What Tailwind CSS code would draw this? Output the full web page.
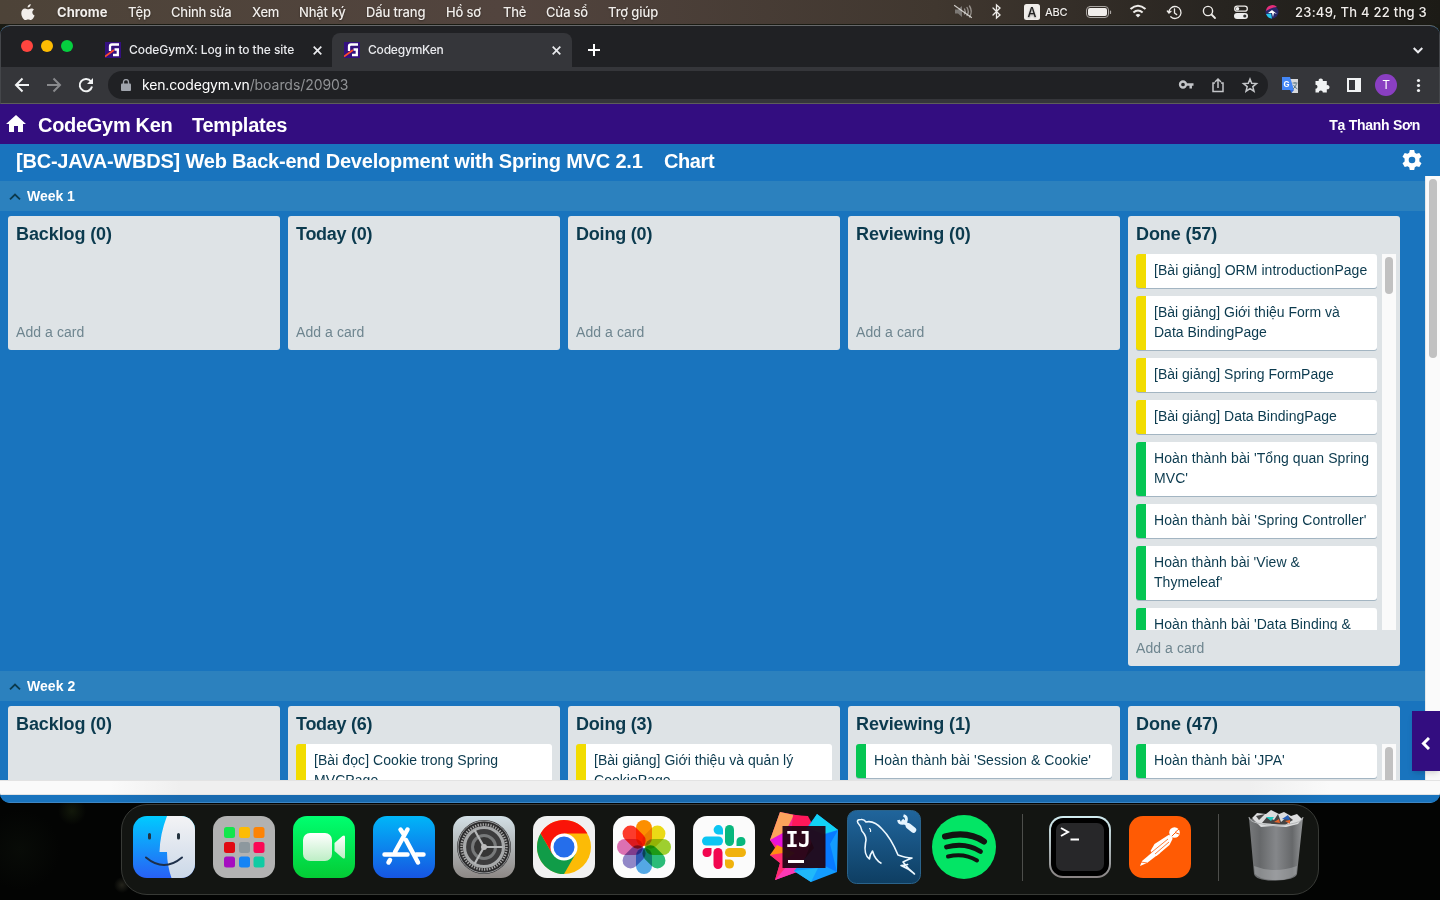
<!DOCTYPE html>
<html lang="vi">
<head>
<meta charset="utf-8">
<title>CodegymKen</title>
<script src="https://cdn.jsdelivr.net/npm/@tailwindcss/browser@4"></script>
</head>
<body class="w-[1440px] h-[900px] overflow-hidden bg-[#030403] font-['Liberation_Sans',Arial,sans-serif]">
<div class="w-[1440px] h-[900px] flex flex-col overflow-hidden bg-[radial-gradient(circle_at_72px_811px,#12180a_0,transparent_14px),radial-gradient(circle_at_20px_850px,#080b07_0,transparent_40px),radial-gradient(circle_at_122px_885px,#24241c_0,transparent_8px),linear-gradient(#24251a,#030403_80px)]">

  <!-- Menu bar -->
  <header class="h-6 mb-px shrink-0 flex items-center text-[13px] text-[#f1eeeb] font-medium font-[Inter,sans-serif] bg-[linear-gradient(90deg,#4d4338,#52443e_35%,#40372f_65%,#272420_85%,#1c1b16)] [text-shadow:0_1px_2px_rgba(0,0,0,.4)] whitespace-nowrap *:[&:is(div)]:pt-px">
    <div class="w-[57px] pl-[21px]"><svg width="14" height="17" viewBox="0 0 14 17" fill="#f1eeeb"><path d="M9.7 0c.2 1.900-1.300 3.600-3.100 3.600C6.400 1.800 8 .2 9.700 0zM13 5.600c-2.500 1.500-2 4.800.6 5.900-.7 2-2.200 4.500-3.700 4.500-1 0-1.400-.6-2.700-.6s-1.800.6-2.700.6C2.600 16 .3 12.500.3 9.200c0-3 1.800-4.800 3.800-4.800 1.200 0 2.200.8 3 .8s1.900-.9 3.400-.8c1 0 1.900.5 2.500 1.200z"/></svg></div>
    <div class="w-[71px] pt-[2px]! font-bold tracking-[0.05px]">Chrome</div>
    <div class="w-[43px] pt-[2px]!">Tệp</div>
    <div class="w-[81px] pt-[2px]! tracking-[-0.22px]">Chỉnh sửa</div>
    <div class="w-[47px] pt-[2px]! tracking-[-0.3px]">Xem</div>
    <div class="w-[67px] pt-[2px]! tracking-[-0.15px]">Nhật ký</div>
    <div class="w-[80px] pt-[2px]! tracking-[-0.15px]">Dấu trang</div>
    <div class="w-[57px] pt-[2px]! tracking-[-0.2px]">Hồ sơ</div>
    <div class="w-[43px] pt-[2px]! tracking-[-0.3px]">Thẻ</div>
    <div class="w-[62px] pt-[2px]! tracking-[-0.25px]">Cửa sổ</div>
    <div class="w-[345px] pt-[2px]! tracking-[-0.12px]">Trợ giúp</div>
    <svg class="shrink-0" width="342" height="24" viewBox="953 0 342 24" fill="none" stroke="#eeece9" stroke-width="1.400" stroke-linecap="round">
      <g opacity=".5"><path d="M955 9.500h3l4-3.500v11l-4-3.500h-3z" fill="#bbb" stroke="none"/><path d="M964.500 9q1.500 2.500 0 5M967 7.500q2.500 4 0 8M969.500 6q3.500 5.500 0 11"/></g><path d="M954.500 5.500l17 12" stroke-width="1.200" opacity=".8"/>
      <path d="M993 8l7 7-3.500 3V5l3.500 3-7 7" stroke-width="1.300"/>
      <rect x="1024" y="4" width="16" height="16" rx="2.500" fill="#f1eeeb" stroke="none"/>
      <rect x="1086.500" y="6.500" width="22" height="11" rx="3.500" stroke="#aaa6a2" stroke-width="1"/><rect x="1088" y="8" width="19" height="8" rx="2" fill="#f1eeeb" stroke="none"/><path d="M1110.500 11v2.500"  stroke="#aaa6a2" stroke-width="1.200"/>
      <path d="M1130.500 9q7.500-6.500 15 0M1133.400 12.500q4.600-4 9.200 0" stroke-width="2.100" stroke-linecap="butt"/><path d="M1135.500 15q2.500-2.200 5 0l-2.500 2.500z" fill="#eee" stroke="none"/>
      <path d="M1169 12.500a6 6 0 1 1 1.800 4.300M1167.300 11l1.700 2 2-1.700M1174.500 9v4l2.200 1.600" stroke-width="1.300"/>
      <circle cx="1208" cy="11" r="4.600"/><path d="M1211.500 14.500l3.500 3.500" stroke-width="1.800"/>
      <rect x="1234.700" y="6.200" width="12.600" height="5" rx="2.500" stroke-width="1.300"/><circle cx="1237.500" cy="8.700" r="1.800" fill="#eee" stroke="none"/><rect x="1234" y="13" width="14" height="6" rx="3" fill="#eee" stroke="none"/><circle cx="1244.800" cy="16" r="1.600" fill="#333" stroke="none"/>
      <circle cx="1272" cy="12" r="6.500" fill="#27286a" stroke="none"/><path d="M1266 11a6.500 6.500 0 0 1 11-4q-5 0-11 4z" fill="#e82e78" stroke="none"/><path d="M1266 14q2 4.500 6 4.500l-1-5z" fill="#27c4e9" stroke="none"/><path d="M1268 13l4-3 5 4-3-1-1 4-1-4z" fill="#fff" stroke="none"/>
      <text x="1032" y="16.500" text-anchor="middle" font-size="12.500" fill="#222" stroke="none">A</text>
      <text x="1045" y="16" font-size="11" textLength="22.500" fill="#eeece9" stroke="none">ABC</text>
    </svg>
    <div class="tracking-[0.25px] -ml-[0px] w-[132px]">23:49, Th 4 22 thg 3</div>
  </header>

  <!-- Browser window -->
  <main class="h-[778px] shrink-0 flex flex-col rounded-[10px] overflow-hidden bg-[#1974be] border-t border-t-[#66686a]">
    <div class="h-[41px] shrink-0 flex items-end bg-[#202124] border-x border-[#44464a] text-xs font-medium text-[#e9eaed] font-[Inter,sans-serif] tracking-[-0.06px]">
      <div class="flex w-[104px] h-full pl-5 pt-[14px] gap-2">
        <span class="size-3 rounded-full bg-[#ff453f]"></span><span class="size-3 rounded-full bg-[#febc02]"></span><span class="size-3 rounded-full bg-[#05cf3f]"></span>
      </div>
      <div class="w-[227px] h-[34px] flex items-center">
        <svg class="shrink-0 mr-2" width="16" height="16" viewBox="0 0 16 16"><path fill="#34107f" d="M0 0h16v16H0z"/><path d="M14 2.500H7Q5 2.500 5 4.500V9M14 7.500H9.500M12.800 7.500V13H8" stroke="#fff" stroke-width="2.300" fill="none"/><path d="M0 14.500L9 8" stroke="#ff4b2b" stroke-width="1.800"/></svg>
        <span class="w-[184px] whitespace-nowrap">CodeGymX: Log in to the site</span>
        <svg width="9" height="9" viewBox="0 0 9 9" stroke="#e9eaed" stroke-width="1.700"><path d="M.7.7l7.600 7.600M8.300.7L.7 8.300"/></svg>
      </div>
      <div class="w-[240px] h-[34px] pl-[12px] rounded-t-[8px] bg-[#35363a] flex items-center">
        <svg class="shrink-0 mr-2" width="16" height="16" viewBox="0 0 16 16"><path fill="#34107f" d="M0 0h16v16H0z"/><path d="M14 2.500H7Q5 2.500 5 4.500V9M14 7.500H9.500M12.800 7.500V13H8" stroke="#fff" stroke-width="2.300" fill="none"/><path d="M0 14.500L9 8" stroke="#ff4b2b" stroke-width="1.800"/></svg>
        <span class="w-[184px] tracking-[-0.2px]">CodegymKen</span>
        <svg width="9" height="9" viewBox="0 0 9 9" stroke="#e9eaed" stroke-width="1.700"><path d="M.7.700l7.600 7.600M8.300.7L.7 8.300"/></svg>
      </div>
      <div class="flex-1 h-[34px] flex items-center justify-between pl-[16px] pr-4">
        <svg width="12" height="12" viewBox="0 0 12 12" stroke="#fff" stroke-width="2"><path d="M6 0v12M0 6h12"/></svg>
        <svg width="10" height="7" viewBox="0 0 10 7" stroke="#e9eaed" stroke-width="2" fill="none"><path d="M.7 1L5 5.300 9.300 1"/></svg>
      </div>
    </div>

    <div class="h-[37px] shrink-0 flex items-center bg-[#35363a] border-x border-b border-[#44464a] border-b-[#5d5e5a]">
      <svg class="shrink-0" width="107" height="36" viewBox="1 67 107 36" fill="none" stroke="#f1f3f4" stroke-width="2"><path d="M29 85H16M22.500 78.500L16 85l6.500 6.500"/><path d="M47 85h13M53.500 78.500L60 85l-6.500 6.500" stroke="#898a8d"/><path d="M91 81.500a6.200 6.200 0 1 0 1 5"/><path d="M93 78v6h-6z" fill="#f1f3f4" stroke="none"/></svg>
      <div class="w-[1160px] h-7 rounded-full bg-[#202124] flex items-center pl-[13px] text-[14px] font-[Inter,sans-serif] text-[#909295]">
        <svg class="mr-[11px]" width="10" height="12" viewBox="0 0 10 12"><path d="M1 4.500h8q1 0 1 1V11q0 1-1 1H1q-1 0-1-1V5.500q0-1 1-1z" fill="#a0a4ac"/><path d="M2.500 5V3a2.500 2.500 0 0 1 5 0v2" stroke="#a0a4ac" stroke-width="1.300" fill="none"/></svg>
        <div class="flex-1 pb-px"><span class="text-white tracking-[-0.16px]">ken.codegym.vn</span><span class="tracking-[-0.06px]">/boards/20903</span></div>
        <svg width="90" height="28" viewBox="1178 71 90 28" fill="none" stroke="#c3c5c8" stroke-width="1.500"><circle cx="1183" cy="84.500" r="3" stroke-width="2.300"/><path d="M1186 84.500h7.500M1190.700 84.500v4" stroke-width="2.500"/><path d="M1215 83h-2v8.500h10V83h-2M1218 88v-8.500M1215 82l3-3 3 3"/><path d="M1250 79l1.700 4.300 4.800.3-3.700 3 1.200 4.600-4-2.600-4 2.600 1.200-4.600-3.700-3 4.800-.3z"/></svg>
      </div>
      <svg class="shrink-0" width="170" height="36" viewBox="1268 67 170 36"><path d="M1289 79h9v14h-6z" fill="#d7d9dc"/><path d="M1282 77h8l4 13h-12z" fill="#4386f5"/><path d="M1290 90h4l-2.500 3z" fill="#3367d6"/><text x="1283.500" y="87" font-size="8" font-weight="700" fill="#fff" font-family="Inter">G</text><path d="M1292.500 83h5M1295 82v1.500M1293 89q3-2 3.500-5.500M1293.500 85q1 2.500 4 4" stroke="#607d8b" fill="none"/><path d="M1315.500 81h3.200a2.100 2.100 0 1 1 4.100 0h4v4.200a2.100 2.100 0 1 1 0 4v3.300h-4a2 2 0 1 0-4 0h-3.300v-3.700a2 2 0 1 0 0-4z" fill="#f1f3f4"/><path d="M1348 79h12v12h-12z" stroke="#f1f3f4" stroke-width="2" fill="none"/><path d="M1355 79h6v12h-6z" fill="#f1f3f4"/><circle cx="1386" cy="85" r="11" fill="#8a3fc2"/><text x="1386" y="89.200" font-size="12" text-anchor="middle" fill="#fff" font-family="Inter">T</text><g fill="#f1f3f4"><circle cx="1418.500" cy="80.500" r="1.600"/><circle cx="1418.500" cy="85.500" r="1.600"/><circle cx="1418.500" cy="90.500" r="1.600"/></g></svg>
    </div>

    <nav class="h-10 shrink-0 bg-[#330d80] flex items-center text-white font-bold text-[20px] pl-[6px] pr-5 pt-px">
      <svg class="mr-[12px] mb-[3px]" width="20" height="17" viewBox="0 0 20 17" fill="#fff"><path d="M10 0l10 9h-3v8h-5v-6H8v6H3V9H0z"/></svg>
      <span class="w-[154px] tracking-[-0.3px]">CodeGym Ken</span><span class="flex-1 tracking-[-0.25px]">Templates</span>
      <span class="text-[14px] pt-px tracking-[-0.27px]">Tạ Thanh Sơn</span>
    </nav>

    <div class="relative flex-1 flex flex-col">
      <div class="h-[32px] shrink-0 flex items-center justify-between pl-4 pr-[18px] pt-[2px] text-white font-bold text-[20px]">
        <div class="flex whitespace-nowrap"><span class="w-[648px] tracking-[-0.21px]">[BC-JAVA-WBDS] Web Back-end Development with Spring MVC 2.1</span><span class="tracking-[-0.4px]">Chart</span></div>
        <svg class="mb-[2px]" width="20" height="20" viewBox="0 0 20 20" fill="#fff"><path fill-rule="evenodd" d="M7.800 0h4.400l.6 2.800 1.700 1 2.800-.9 2.200 3.800-2.100 1.900v2.800l2.100 1.900-2.200 3.800-2.800-.9-1.700 1-.6 2.800H7.800l-.6-2.800-1.700-1-2.800.9L.5 13.300l2.100-1.900V8.600L.5 6.700l2.200-3.800 2.800.9 1.700-1zM10 6.700a3.300 3.300 0 1 0 0 6.600 3.300 3.300 0 0 0 0-6.600z"/></svg>
      </div>

      <div class="h-[604px] flex">
        <div class="w-[1425px] h-full overflow-hidden pt-[5px] text-[#0b3a4e]">
          <div class="h-[30px] bg-[#2c81be] flex items-center pl-[9px] text-white font-bold text-[14px] tracking-[-0.05px]"><svg class="mr-[6px]" width="12" height="7" viewBox="0 0 12 7" stroke="#0b3a4e" stroke-width="1.800" fill="none"><path d="M1 6.300L6 1.500l5 4.800"/></svg>Week 1</div>
          <div class="h-[460px] pt-[5px] px-2 flex items-start gap-2">
            <section class="w-[272px] h-[134px] rounded-[3px] bg-[#dee3e6] px-2 pb-2 flex flex-col justify-between"><h2 class="text-[18px] font-bold leading-[36px] tracking-[-0.1px]">Backlog (0)</h2><p class="text-[14px] leading-5 text-[#6e858f] tracking-[0.07px]">Add a card</p></section>
            <section class="w-[272px] h-[134px] rounded-[3px] bg-[#dee3e6] px-2 pb-2 flex flex-col justify-between"><h2 class="text-[18px] font-bold leading-[36px] tracking-[-0.28px]">Today (0)</h2><p class="text-[14px] leading-5 text-[#6e858f] tracking-[0.07px]">Add a card</p></section>
            <section class="w-[272px] h-[134px] rounded-[3px] bg-[#dee3e6] px-2 pb-2 flex flex-col justify-between"><h2 class="text-[18px] font-bold leading-[36px] tracking-[-0.2px]">Doing (0)</h2><p class="text-[14px] leading-5 text-[#6e858f] tracking-[0.07px]">Add a card</p></section>
            <section class="w-[272px] h-[134px] rounded-[3px] bg-[#dee3e6] px-2 pb-2 flex flex-col justify-between"><h2 class="text-[18px] font-bold leading-[36px] tracking-[-0.1px]">Reviewing (0)</h2><p class="text-[14px] leading-5 text-[#6e858f] tracking-[0.07px]">Add a card</p></section>
            <section class="w-[272px] h-[450px] rounded-[3px] bg-[#dee3e6] pl-2"><h2 class="text-[18px] font-bold leading-[36px] h-[38px] tracking-[-0.1px]">Done (57)</h2>
              <div class="h-[376px] overflow-hidden flex text-[14px] leading-5">
                <div class="w-[241px] mr-[5px] flex flex-col gap-2 *:bg-white *:rounded-[3px] *:border-l-[10px] *:pl-2 *:pt-[6px] *:pb-2 *:whitespace-nowrap *:shadow-[0_1px_0_#a3b5c2] *:shrink-0">
                  <div class="border-[#f2dc00] tracking-[0.05px]">[Bài giảng] ORM introductionPage</div>
                  <div class="border-[#f2dc00]">[Bài giảng] Giới thiệu Form và<br>Data BindingPage</div>
                  <div class="border-[#f2dc00]">[Bài giảng] Spring FormPage</div>
                  <div class="border-[#f2dc00]">[Bài giảng] Data BindingPage</div>
                  <div class="border-[#05c653] tracking-[0.07px]">Hoàn thành bài 'Tổng quan Spring<br>MVC'</div>
                  <div class="border-[#05c653] tracking-[0.1px]">Hoàn thành bài 'Spring Controller'</div>
                  <div class="border-[#05c653] tracking-[0.05px]">Hoàn thành bài 'View &amp;<br>Thymeleaf'</div>
                  <div class="border-[#05c653] tracking-[0.07px]">Hoàn thành bài 'Data Binding &amp;</div>
                </div>
                <div class="w-[14px] bg-[#fafafa] pl-[3px] pt-[3px]"><div class="w-2 h-[37px] rounded-full bg-[#c1c1c1]"></div></div>
              </div>
              <p class="text-[14px] leading-5 pt-2 text-[#6e858f] tracking-[0.07px]">Add a card</p>
            </section>
          </div>
          <div class="h-[30px] bg-[#2c81be] flex items-center pl-[9px] text-white font-bold text-[14px] tracking-[0.05px]"><svg class="mr-[6px]" width="12" height="7" viewBox="0 0 12 7" stroke="#0b3a4e" stroke-width="1.800" fill="none"><path d="M1 6.300L6 1.500l5 4.800"/></svg>Week 2</div>
          <div class="h-[200px] pt-[5px] px-2 flex gap-2">
            <section class="w-[272px] rounded-[3px] bg-[#dee3e6] px-2"><h2 class="text-[18px] font-bold leading-[36px] tracking-[-0.1px]">Backlog (0)</h2></section>
            <section class="w-[272px] rounded-[3px] bg-[#dee3e6] px-2"><h2 class="text-[18px] font-bold leading-[36px] mb-[2px] tracking-[-0.28px]">Today (6)</h2><div class="bg-white rounded-[3px] border-l-[10px] border-[#f2dc00] pl-2 pt-[6px] pb-2 text-[14px] leading-5 tracking-[0.07px]">[Bài đọc] Cookie trong Spring<br>MVCPage</div></section>
            <section class="w-[272px] rounded-[3px] bg-[#dee3e6] px-2"><h2 class="text-[18px] font-bold leading-[36px] mb-[2px] tracking-[-0.2px]">Doing (3)</h2><div class="bg-white rounded-[3px] border-l-[10px] border-[#f2dc00] pl-2 pt-[6px] pb-2 text-[14px] leading-5 tracking-[0.03px]">[Bài giảng] Giới thiệu và quản lý<br>CookiePage</div></section>
            <section class="w-[272px] rounded-[3px] bg-[#dee3e6] px-2"><h2 class="text-[18px] font-bold leading-[36px] mb-[2px] tracking-[-0.1px]">Reviewing (1)</h2><div class="bg-white rounded-[3px] border-l-[10px] border-[#05c653] pl-2 pt-[6px] pb-2 text-[14px] leading-5 tracking-[0.07px] shadow-[0_1px_0_#a3b5c2]">Hoàn thành bài 'Session &amp; Cookie'</div></section>
            <section class="w-[272px] rounded-[3px] bg-[#dee3e6] pl-2"><h2 class="text-[18px] font-bold leading-[36px] mb-[2px]">Done (47)</h2><div class="flex items-start"><div class="w-[241px] mr-[5px] bg-white rounded-[3px] border-l-[10px] border-[#05c653] pl-2 pt-[6px] pb-2 text-[14px] leading-5 tracking-[0.1px] shadow-[0_1px_0_#a3b5c2]">Hoàn thành bài 'JPA'</div><div class="w-[14px] h-[80px] bg-[#fafafa] pl-[3px] pt-[3px]"><div class="w-2 h-[100px] rounded-full bg-[#c1c1c1]"></div></div></div></section>
          </div>
        </div>
        <div class="w-[15px] h-full bg-[#fafafa] border-l border-[#e8e8e8] pl-[3px] pt-[3px]"><div class="w-2 h-[179px] rounded-full bg-[#c1c1c1]"></div></div>
      </div>
      <div class="h-[15px] shrink-0 border-y border-[#e3e3e3] bg-[linear-gradient(90deg,#fafafa_110px,#efefef_180px,#efefef_1250px,#fafafa_1330px)]"></div>
      <div class="flex-1 bg-[linear-gradient(90deg,#1974be_100px,#196aaf_180px,#196aaf_1250px,#1974be_1330px)] border-b border-[#3d86c4]"></div>
      <button class="absolute right-0 top-[567px] w-7 h-[60px] pr-[2px] pt-1 bg-[#330d80] flex items-center justify-center shadow-md"><svg width="9" height="13" viewBox="0 0 9 13" fill="none" stroke="#fff" stroke-width="3"><path d="M8 1L2.500 6.500 8 12"/></svg></button>
    </div>
  </main>

  <!-- Dock -->
  <footer class="mt-px ml-[121px] w-[1198px] h-[91px] shrink-0 rounded-[26px] border border-[#383a36] bg-[#131512] px-[2px] pb-[5px] flex items-center *:shrink-0">
    <svg width="80" height="80" viewBox="-9 -9 80 80"><defs><linearGradient id="fb" x2="0" y2="1"><stop stop-color="#00cbff"/><stop offset="1" stop-color="#2860f5"/></linearGradient><linearGradient id="fw" x2="0" y2="1"><stop stop-color="#f3f3f5"/><stop offset="1" stop-color="#cbd8e8"/></linearGradient><clipPath id="rc"><rect width="62" height="62" rx="14"/></clipPath></defs><g clip-path="url(#rc)"><path fill="url(#fb)" d="M0 0h62v62H0z"/><path d="M34 0q-7 18-7.500 36H34q0 13 4.500 26H62V0z" fill="url(#fw)"/></g><path d="M16.500 18.500v3.500M45.500 18.500v3.500" stroke="#23323e" stroke-width="3" stroke-linecap="round"/><path d="M13 41.500q18 15 36 0" stroke="#1d2f49" stroke-width="2" fill="none" stroke-linecap="round"/></svg>

    <svg width="80" height="80" viewBox="-9 -9 80 80"><rect width="62" height="62" rx="14" fill="#b2b2b2"/><g><rect x="11" y="11" width="11" height="11" rx="2.500" fill="#13e64c"/><rect x="26" y="11" width="11" height="11" rx="2.500" fill="#fcbc05"/><rect x="40.500" y="11" width="11" height="11" rx="2.500" fill="#fd8306"/><rect x="11" y="26" width="11" height="11" rx="2.500" fill="#e10811"/><rect x="26" y="26" width="11" height="11" rx="2.500" fill="#8d989e"/><rect x="40.500" y="26" width="11" height="11" rx="2.500" fill="#fb0755"/><rect x="11" y="40.500" width="11" height="11" rx="2.500" fill="#a50dc0"/><rect x="26" y="40.500" width="11" height="11" rx="2.500" fill="#1584f5"/><rect x="40.500" y="40.500" width="11" height="11" rx="2.500" fill="#0fcba3"/></g></svg>

    <svg width="80" height="80" viewBox="-9 -9 80 80"><defs><linearGradient id="gr" x2="0" y2="1"><stop stop-color="#00ff70"/><stop offset="1" stop-color="#04cc35"/></linearGradient><linearGradient id="wg" x2="0" y2="1"><stop stop-color="#fff"/><stop offset="1" stop-color="#bdeec5"/></linearGradient></defs><rect width="62" height="62" rx="14" fill="url(#gr)"/><rect x="10" y="17" width="29" height="28" rx="7" fill="url(#wg)"/><path d="M41.500 27l8-7q2.500-1.500 2.500 1v20q0 2.500-2.500 1l-8-7z" fill="url(#wg)"/></svg>

    <svg width="80" height="80" viewBox="-9 -9 80 80"><defs><linearGradient id="as" x2="0" y2="1"><stop stop-color="#00b6f8"/><stop offset="1" stop-color="#1755e2"/></linearGradient></defs><rect width="62" height="62" rx="14" fill="url(#as)"/><g stroke="#fff" stroke-width="4.500" stroke-linecap="round"><path d="M27.500 13.500l3 4.500M34.500 13.500L22 36M33 24l12 22.500M11.500 38.500h23M43 38.500h7.500M17 44l-1.500 2.500"/></g></svg>

    <svg width="80" height="80" viewBox="-9 -9 80 80"><defs><linearGradient id="sg" x2="0" y2="1"><stop stop-color="#d3e0e6"/><stop offset="1" stop-color="#8d8885"/></linearGradient></defs><rect width="62" height="62" rx="14" fill="url(#sg)"/><circle cx="31" cy="31" r="27" fill="#2c2c2d"/><circle cx="31" cy="31" r="26" stroke="#999b9d" fill="none"/><circle cx="31" cy="31" r="22.500" stroke="#aaa" stroke-width="2.500" stroke-dasharray="1.300 1.300" fill="none"/><circle cx="31" cy="31" r="19.500" stroke="#a7a9aa" stroke-width="3.200" fill="#3c3c3d"/><circle cx="31" cy="31" r="11.500" stroke="#77797a" stroke-width="3" fill="#353535"/><path d="M31 31h19M31 31l-9.500-17M31 31l-9.500 17" stroke="#b5b7b8" stroke-width="2.200"/><circle cx="31" cy="31" r="3" fill="#bbb"/></svg>

    <svg width="80" height="80" viewBox="-9 -9 80 80"><rect width="62" height="62" rx="14" fill="#f1f1f1"/><circle cx="31" cy="31" r="27" fill="#fcbb06"/><path d="M7.600 17.500A27 27 0 0 0 31 58l11.700-20.200H19.300z" fill="#109c48"/><path d="M7.600 17.500L19.300 37.800 31 31V17.500h23.400A27 27 0 0 0 7.600 17.500z" fill="#fa1408"/><circle cx="31" cy="31" r="13.500" fill="#fff"/><circle cx="31" cy="31" r="10.500" fill="#256eeb"/></svg>

    <svg width="80" height="80" viewBox="-9 -9 80 80"><rect width="62" height="62" rx="14" fill="#fcfcfc"/><g class="*:mix-blend-multiply"><rect x="23" y="4" width="16" height="26" rx="8" fill="#ff9100"/><rect x="23" y="4" width="16" height="26" rx="8" fill="#eedd16" transform="rotate(45 31 31)"/><rect x="23" y="4" width="16" height="26" rx="8" fill="#a0d22f" transform="rotate(90 31 31)"/><rect x="23" y="4" width="16" height="26" rx="8" fill="#2cbe79" transform="rotate(135 31 31)"/><rect x="23" y="4" width="16" height="26" rx="8" fill="#55aae8" transform="rotate(180 31 31)"/><rect x="23" y="4" width="16" height="26" rx="8" fill="#9389ca" transform="rotate(225 31 31)"/><rect x="23" y="4" width="16" height="26" rx="8" fill="#df71b4" transform="rotate(270 31 31)"/><rect x="23" y="4" width="16" height="26" rx="8" fill="#ff3b2c" transform="rotate(315 31 31)"/></g></svg>

    <svg width="80" height="80" viewBox="-9 -9 80 80"><rect width="62" height="62" rx="14" fill="#fbfbfb"/><g fill="#0bc5f2"><rect x="9" y="20.500" width="21" height="9" rx="4.500"/><path d="M30 18.500h-5a4.700 4.700 0 1 1 5-4.700z"/></g><g fill="#08b77d"><rect x="32" y="9" width="9" height="21" rx="4.500"/><path d="M43.500 30v-5a4.500 4.500 0 1 1 4.700 5z"/></g><g fill="#f0b20d"><rect x="32" y="32" width="21" height="9" rx="4.500"/><path d="M32 43.500h5a4.500 4.500 0 1 1-5 4.700z"/></g><g fill="#f2064f"><rect x="20.500" y="32" width="9" height="21" rx="4.500"/><path d="M18.500 32v5a4.500 4.500 0 1 1-4.700-5z"/></g></svg>

    <svg width="80" height="80" viewBox="764 807 80 80"><path d="M780 812l21 4 13 20-14 35-25 9 5-17-10-8 7-4-7-11z" fill="#fa258f"/><path d="M780 812l14 3-15 29-9-4z" fill="#fca35c"/><path d="M793 815l15 1 10 19-27 2z" fill="#ff185a"/><path d="M770 840l22-12-5 26z" fill="#e712db"/><path d="M770 855l7-10 18 8-12 8z" fill="#ff8d13"/><path d="M783 853l10 19-18 8 5-17-10-8z" fill="#ff2c70"/><path d="M775 880l17-20 10 10z" fill="#fb39b5"/><path d="M817 814l21 16-1 42-26 10-17-11 20-23-8-19z" fill="#139cff"/><path d="M817 814l21 16-15 4-15-6z" fill="#12d3f6"/><path d="M838 830l-8 14 7 28-14-7v-30z" fill="#087aff"/><path d="M794 871l17 11 7-14z" fill="#20b9fa"/><path d="M782.500 826h43v42h-43z" fill="#210514" fill-opacity=".94"/><text x="785.500" y="847" font-size="21.500" font-weight="700" fill="#fff" font-family="DejaVu Sans Mono" letter-spacing="-.5">IJ</text><path d="M788 860h16v3h-16z" fill="#fff"/></svg>

    <svg width="80" height="80" viewBox="844 807 80 80"><defs><linearGradient id="my" x2="0" y2="1"><stop stop-color="#20659c"/><stop offset="1" stop-color="#0e3e62"/></linearGradient></defs><rect x="847.500" y="810.500" width="73" height="73" rx="9" fill="url(#my)" stroke="#2a638b"/><path d="M881.500 863.500Q875 860 872.500 851q-3 4-3 8-6-4-4-16 2-6-3.500-12-1-5-4-8Q856 819.500 861 819.500q3-.5 5 2.500 8-2 16 7 9 9 16 26 8 3 14 3-5 2-9 4 5 7 11.500 12-7-6-13.500-8.500 6 0 7-1.500" fill="none" stroke="#edf8ff" stroke-width="1.600" stroke-linejoin="round"/><path d="M869 828.500q2 0 1.500 3.500" stroke="#edf8ff" stroke-width="1.200" fill="none"/><path d="M902 820l10 9" stroke="#e6f5ff" stroke-width="3.500"/><path d="M903.500 815.500a4 4 0 1 1-5 4.500" stroke="#e6f5ff" stroke-width="2.800" fill="none"/><path d="M908.500 826l5 4" stroke="#e6f5ff" stroke-width="5.500" stroke-linecap="round"/></svg>

    <svg width="80" height="80" viewBox="-8 -8 80 80"><circle cx="32" cy="32" r="32" fill="#03e565"/><g stroke="#121411" fill="none" stroke-linecap="round"><path d="M13 21.500q23-6 39 5" stroke-width="6"/><path d="M14.500 32q19-5 34 4.500" stroke-width="4.800"/><path d="M16 41.500q16-4 29 4" stroke-width="4"/></g></svg>

    <div class="w-9 flex justify-center"><div class="w-px h-[67px] bg-[#4d4e4b]"></div></div>

    <svg width="80" height="80" viewBox="-9 -9 80 80"><defs><linearGradient id="tb" x2="0" y2="1"><stop stop-color="#d2edf1"/><stop offset="1" stop-color="#898383"/></linearGradient></defs><rect width="62" height="62" rx="14" fill="url(#tb)"/><rect x="2" y="2" width="58" height="58" rx="12" fill="#000"/><rect x="7" y="7" width="48" height="48" rx="7" fill="#272729"/><path d="M12 12l7 4-7 4" stroke="#fff" stroke-width="2" fill="none"/><path d="M21.500 23.500h8.500" stroke="#fff" stroke-width="2"/></svg>

    <svg width="80" height="80" viewBox="1120 807 80 80"><rect x="1129" y="816" width="62" height="62" rx="14" fill="#ff5b04"/><circle cx="1174.500" cy="832.500" r="5.300" fill="#fff"/><path d="M1179 829l-4 3.500 4 1.500M1171 837l4-4" stroke="#ff5b04" fill="none"/><path d="M1168.500 835q4 0 4 4l-3 6-13 11-3-2-3-3 4-7z" fill="#fff"/><path d="M1155 850l5 3-13 10-7 3 2-5z" fill="#fff"/><path d="M1152 852l16-13M1155 854l14-12M1141 862l6 1" stroke="#ff5b04" stroke-width=".8"/></svg>

    <div class="w-9 flex justify-center"><div class="w-px h-[67px] bg-[#4d4e4b]"></div></div>

    <svg width="80" height="80" viewBox="1236 807 80 80"><defs><linearGradient id="tr"><stop stop-color="#77797b"/><stop offset=".2" stop-color="#66686a"/><stop offset=".5" stop-color="#85878a"/><stop offset=".8" stop-color="#66686a"/><stop offset="1" stop-color="#939597"/></linearGradient></defs><path d="M1249 818q27 10 54 0l-6 56q-2 6-21.500 6.500t-21.500-6.500z" fill="url(#tr)"/><path d="M1254 866q20 8 43 0l-1 8q-5 6-20.500 6t-20.500-6z" fill="#b4b6b8" opacity=".45"/><path d="M1252 818l5-5 9 1 5-4 8 4 5-2 7 4 6-2 5 5-4 5-12 3-13-1-12 1z" fill="#dcddde"/><path d="M1262 823l5-6 7 3 4-6 3 8 7-6 5 4-8 5zM1256 816l9-2-6 6z" fill="#444"/><path d="M1266 817l8 0-3 4z" fill="#1cc7bf"/><path d="M1282 819l6-4 2 5z" fill="#275fb8"/><path d="M1274 822l5-3 1 4zM1285 821l5-1 0 4z" fill="#e2642b"/><path d="M1249 817q0 4 8 6 19 5 38 0 8-2 8-6" stroke="#b6b8b9" fill="none"/></svg>
  </footer>
</div>
</body>
</html>
